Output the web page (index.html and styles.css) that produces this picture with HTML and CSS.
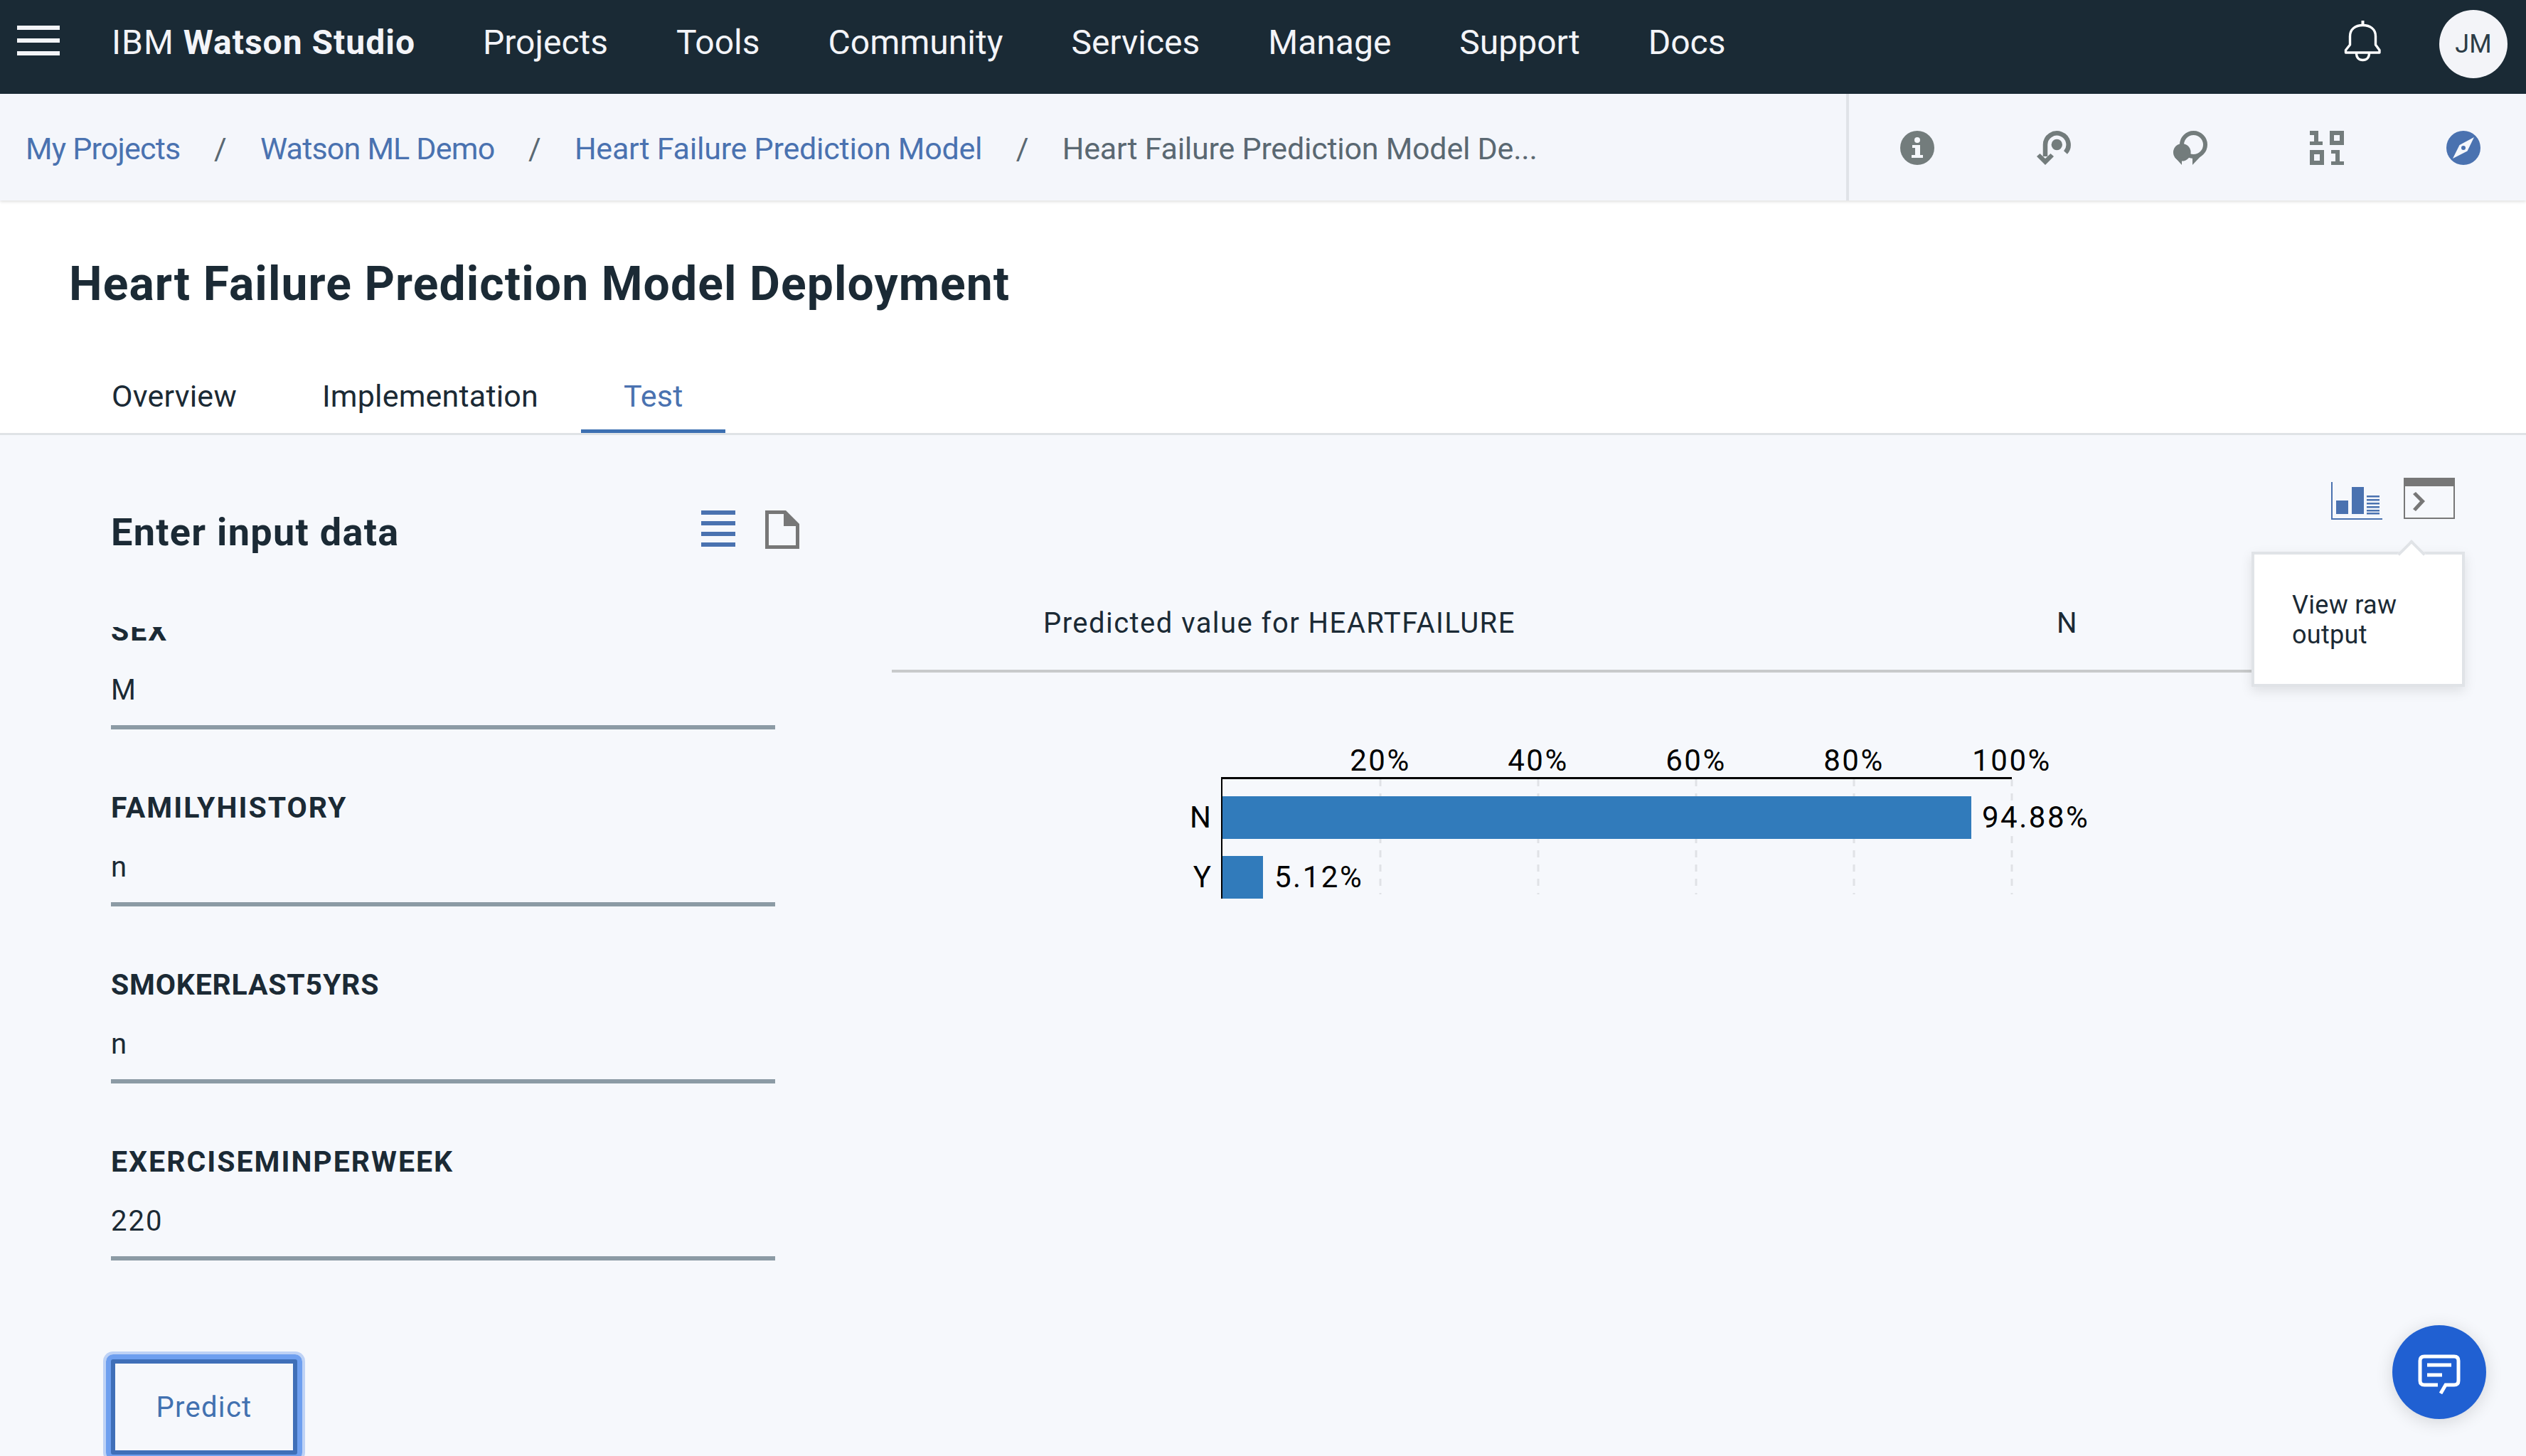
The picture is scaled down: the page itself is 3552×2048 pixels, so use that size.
FILE: index.html
```html
<!DOCTYPE html>
<html lang="en">
<head>
    <meta charset="UTF-8" />
    <title>Heart Failure Prediction Model Deployment</title>
    <link rel="stylesheet" href="styles.css">
</head>
<body>
    <header class="topbar">
        <div class="burger"><span></span><span></span><span></span></div>
        <div class="brand">IBM <b>Watson Studio</b></div>
        <nav class="mainnav">
            <a>Projects</a>
            <a>Tools</a>
            <a>Community</a>
            <a>Services</a>
            <a>Manage</a>
            <a>Support</a>
            <a>Docs</a>
        </nav>
        <svg class="bell" viewBox="0 0 52 58" fill="none" stroke="#fff" stroke-width="3.4">
            <path d="M26.5 0V6" stroke-width="4"/>
            <path d="M2.5 45V41.5L8.5 34V22C8.5 12 16 6.5 26.5 6.5S44.5 12 44.5 22V34L50 41.5V45Z" stroke-linejoin="round"/>
            <path d="M17.5 46C17.5 52 21 55.5 26.5 55.5S35.5 52 35.5 46"/>
        </svg>
        <div class="avatar">JM</div>
    </header>

    <div class="crumbbar">
        <div class="crumbs">
            <a class="short">My Projects</a><span class="sep">/</span>
            <a class="short">Watson ML Demo</a><span class="sep">/</span>
            <a>Heart Failure Prediction Model</a><span class="sep">/</span>
            <span class="current">Heart Failure Prediction Model De...</span>
        </div>
        <div class="tools">
            <svg viewBox="0 0 48 48">
                <circle cx="24" cy="24" r="24" fill="#737c7c"/>
                <circle cx="24" cy="13" r="4" fill="#f5f7fb"/>
                <path d="M17 20H28V34H32V38H16V34H21V24H17Z" fill="#f5f7fb"/>
            </svg>
            <svg viewBox="0 0 48 48" fill="#737c7c">
                <circle cx="28.3" cy="19.5" r="7.7"/>
                <path d="M12 36V19.5A16.3 16.3 0 1 1 40.5 30.5" fill="none" stroke="#737c7c" stroke-width="6.5"/>
                <path d="M0 36L4.5 32L12 39L19.5 32L24 36L12 48Z"/>
            </svg>
            <svg viewBox="0 0 48 48" fill="#737c7c">
                <circle cx="28.5" cy="19.5" r="16.5" fill="none" stroke="#737c7c" stroke-width="6"/>
                <circle cx="12.3" cy="30.3" r="12.3"/>
                <path d="M2 37L12 48V41L20 38Z"/>
                <path d="M27 48V37L38 34L46 28Z"/>
            </svg>
            <svg viewBox="0 0 48 48" fill="#737c7c">
                <path d="M0 0H12V15H18V20H0V15H6V6H0Z"/>
                <path fill-rule="evenodd" d="M28 0H48V20H28ZM34 6V14H42V6Z"/>
                <path fill-rule="evenodd" d="M0 27H20V48H0ZM6 33V42H14V33Z"/>
                <path d="M30 27H42V43H48V48H30V43H36V32H30Z"/>
            </svg>
            <svg viewBox="0 0 48 48">
                <circle cx="24" cy="24" r="24" fill="#4a72b0"/>
                <path d="M39 9L29.5 28.5L9 39L18.5 20Z" fill="#f5f7fb"/>
                <circle cx="24" cy="24" r="3" fill="#4a72b0"/>
            </svg>
        </div>
    </div>

    <div class="pagehead">
        <h1>Heart Failure Prediction Model Deployment</h1>
        <div class="tabs">
            <a>Overview</a>
            <a>Implementation</a>
            <a class="active">Test</a>
        </div>
    </div>

    <main class="content">
        <section class="inputpane">
            <div class="panehead">
                <h2>Enter input data</h2>
                <svg class="listicon" viewBox="0 0 48 51" fill="#4a72b0">
                    <rect y="0" width="48" height="6"/>
                    <rect y="15" width="48" height="6"/>
                    <rect y="30" width="48" height="6"/>
                    <rect y="45" width="48" height="6"/>
                </svg>
                <svg class="docicon" viewBox="0 0 48 54" fill="#777">
                    <path fill-rule="evenodd" d="M0 0H29L48 19V54H0ZM5 5V49H43V22H26V5Z"/>
                </svg>
            </div>
            <div class="fields">
                <div class="field">
                    <label>SEX</label>
                    <div class="value">M</div>
                </div>
                <div class="field">
                    <label>FAMILYHISTORY</label>
                    <div class="value">n</div>
                </div>
                <div class="field">
                    <label>SMOKERLAST5YRS</label>
                    <div class="value">n</div>
                </div>
                <div class="field">
                    <label>EXERCISEMINPERWEEK</label>
                    <div class="value">220</div>
                </div>
            </div>
            <button class="predict">Predict</button>
        </section>

        <section class="resultpane">
            <div class="viewicons">
                <svg class="charticon" viewBox="0 0 72 53" fill="#4a72b0">
                    <path d="M0 0H2V51H72V53H0Z"/>
                    <rect x="7" y="26" width="17" height="19"/>
                    <rect x="29" y="7" width="17" height="38"/>
                    <rect x="50" y="19" width="18" height="2.5"/>
                    <rect x="50" y="24" width="18" height="2.5"/>
                    <rect x="50" y="29" width="18" height="2.5"/>
                    <rect x="50" y="34" width="18" height="2.5"/>
                    <rect x="50" y="39" width="18" height="2.5"/>
                    <rect x="50" y="43" width="18" height="2.5"/>
                </svg>
                <svg class="termicon" viewBox="0 0 72 58" fill="#777">
                    <path fill-rule="evenodd" d="M0 0H72V58H0ZM2 12V56H70V12Z"/>
                    <path d="M13 23L17 20L30 33L17 47L13 44L23 33Z"/>
                </svg>
            </div>
            <div class="resultrow">
                <span class="resultname">Predicted value for HEARTFAILURE</span>
                <span>N</span>
            </div>
            <svg class="chart" viewBox="1660 1040 1300 240">
                <g class="grid">
                    <line x1="1941" y1="1096" x2="1941" y2="1258"/>
                    <line x1="2163" y1="1096" x2="2163" y2="1258"/>
                    <line x1="2385" y1="1096" x2="2385" y2="1258"/>
                    <line x1="2607" y1="1096" x2="2607" y2="1258"/>
                    <line x1="2829" y1="1096" x2="2829" y2="1258"/>
                </g>
                <rect class="bar" x="1718" y="1120" width="1054" height="60"/>
                <rect class="bar" x="1718" y="1204" width="58" height="60"/>
                <rect x="1719" y="1093" width="1110" height="3" fill="#000"/>
                <rect x="1717" y="1093" width="2" height="171" fill="#000"/>
                <g class="ticks">
                    <text x="1941" y="1084">20%</text>
                    <text x="2163" y="1084">40%</text>
                    <text x="2385" y="1084">60%</text>
                    <text x="2607" y="1084">80%</text>
                    <text x="2829" y="1084">100%</text>
                </g>
                <text class="cat" x="1703" y="1164">N</text>
                <text class="cat" x="1703" y="1248">Y</text>
                <text class="pct" x="2787" y="1164">94.88%</text>
                <text class="pct" x="1792" y="1248">5.12%</text>
            </svg>
            <div class="tooltip">View raw output</div>
        </section>
    </main>

    <div class="chatbtn">
        <svg viewBox="0 0 60 56" fill="none" stroke="#fff" stroke-width="5">
            <path d="M28 43H9Q3 43 3 37V9Q3 3 9 3H51Q57 3 57 9V37Q57 43 51 43H39L32 55"/>
            <path d="M13 15H47M13 29H34"/>
        </svg>
    </div>
</body>
</html>
```

FILE: styles.css
```css
html, body {
    margin: 0;
    padding: 0;
    height: 2048px;
    overflow: hidden;
}
body {
    font-family: Roboto, "Noto Sans", sans-serif;
    background-color: #f6f8fc;
    color: #1b2a35;
    position: relative;
}
a {
    color: inherit;
    text-decoration: none;
}

/* top bar */
.topbar {
    height: 132px;
    background-color: #1a2a35;
    color: #f3f4f8;
    display: flex;
    align-items: center;
    font-size: 48px;
}
.burger {
    width: 60px;
    height: 42px;
    margin: -18px 0 0 24px;
    display: flex;
    flex-direction: column;
    justify-content: space-between;
}
.burger span {
    display: block;
    height: 6px;
    background-color: #f3f4f8;
}
.brand {
    margin: -13px 0 0 73px;
    width: 522px;
    flex: none;
    letter-spacing: 1px;
}
.brand b {
    font-weight: 700;
}
.mainnav {
    display: flex;
    gap: 96px;
    margin-top: -13px;
    flex: 1;
}
.bell {
    width: 52px;
    height: 58px;
    margin: -16px 82px 0 0;
}
.avatar {
    width: 96px;
    height: 96px;
    border-radius: 50%;
    background-color: #f3f4f8;
    color: #2c3c46;
    font-size: 36px;
    display: flex;
    align-items: center;
    justify-content: center;
    margin: -8px 26px 0 0;
}

/* breadcrumb row */
.crumbbar {
    height: 150px;
    display: flex;
    background-color: #f4f6fb;
    box-shadow: 0 2px 4px rgba(0, 0, 0, 0.12);
    position: relative;
    font-size: 43px;
    letter-spacing: -0.23px;
}
.crumbs {
    width: 2596px;
    padding: 4px 0 0 36px;
    box-sizing: border-box;
    display: flex;
    align-items: center;
    color: #4a72b0;
}
.crumbs .short {
    letter-spacing: -0.8px;
}
.sep {
    color: #5a6872;
    margin: 0 47.5px;
}
.current {
    color: #5a6872;
}
.tools {
    flex: 1;
    border-left: 4px solid #e0e3e8;
    display: flex;
    align-items: center;
    padding: 2px 0 0 72px;
    gap: 144px;
}
.tools svg {
    width: 48px;
    height: 48px;
}

/* title and tabs */
.pagehead {
    background-color: #fff;
    height: 327px;
    border-bottom: 3px solid #dfe3e6;
    display: flex;
    flex-direction: column;
}
h1 {
    font-size: 66px;
    font-weight: 700;
    letter-spacing: 1.1px;
    margin: 0;
    padding: 76px 0 0 97px;
    line-height: 84px;
    height: 160px;
}
.tabs {
    display: flex;
    font-size: 43px;
    letter-spacing: 0.2px;
    padding-left: 97px;
    margin-top: 1px;
}
.tabs a {
    padding: 0 60px;
    height: 90px;
    line-height: 76px;
    box-sizing: border-box;
}
.tabs a.active {
    color: #4a72b0;
    border-bottom: 5px solid #3d70b2;
}

/* main area */
.content {
    display: flex;
    height: 1436px;
}
.inputpane {
    width: 1254px;
    flex: none;
    box-sizing: border-box;
    padding-left: 156px;
}
.panehead {
    width: 968px;
    height: 120px;
    margin-top: 78px;
    display: flex;
    align-items: center;
}
h2 {
    font-size: 54px;
    font-weight: 700;
    letter-spacing: 1.3px;
    margin: -4px 0 0;
    flex: 1;
}
.listicon {
    width: 48px;
    height: 51px;
    margin-right: 42px;
    margin-top: -14px;
}
.docicon {
    width: 48px;
    height: 54px;
    margin-top: -10px;
}
.fields {
    width: 934px;
    height: 960px;
    margin-top: 72px;
    overflow: hidden;
}
.field {
    height: 249px;
    box-sizing: border-box;
    padding-top: 85px;
    border-bottom: 6px solid #8c9ba5;
}
.field:first-child {
    margin-top: -105px;
}
.field label {
    display: block;
    font-size: 41px;
    font-weight: 700;
    letter-spacing: 2px;
    line-height: 50px;
}
.field:nth-child(3) label {
    letter-spacing: 0.8px;
}
.value {
    font-size: 40px;
    letter-spacing: 2px;
    line-height: 86px;
    margin-top: 16px;
}
.predict {
    display: block;
    position: relative;
    width: 262px;
    height: 134px;
    margin-top: 70px;
    background: transparent;
    border: 6px solid #3f6fb8;
    color: #4271b0;
    font-family: inherit;
    font-size: 40px;
    letter-spacing: 1.3px;
    padding: 0;
}
.predict::before {
    content: "";
    position: absolute;
    inset: -13px;
    border: 7px solid #6e9fef;
    border-radius: 10px;
    box-shadow: 0 0 0 4px #bed2f5;
}
.resultpane {
    flex: none;
    width: 2212px;
    position: relative;
}
.viewicons {
    height: 58px;
    margin-top: 60px;
    padding-right: 14px;
    display: flex;
    justify-content: flex-end;
    align-items: flex-end;
    gap: 30px;
}
.charticon {
    width: 72px;
    height: 53px;
    margin-bottom: -1px;
}
.termicon {
    width: 72px;
    height: 58px;
}
.resultrow {
    height: 130px;
    margin-top: 86px;
    box-sizing: border-box;
    border-bottom: 4px solid #c8cacb;
    padding: 0 0 6px 213px;
    display: flex;
    align-items: center;
    font-size: 40px;
    letter-spacing: 1.45px;
}
.resultname {
    width: 1425px;
}
.chart {
    display: block;
    width: 1300px;
    height: 240px;
    margin: 94px 0 0 406px;
    font-size: 42px;
}
.chart text {
    fill: #000;
}
.grid line {
    stroke: #e0e2e6;
    stroke-width: 3;
    stroke-dasharray: 10 10;
}
.bar {
    fill: #317bbb;
}
.ticks text {
    text-anchor: middle;
    letter-spacing: 2.5px;
}
.pct {
    letter-spacing: 2.5px;
}
.cat {
    text-anchor: end;
}

/* tooltip over the result table */
.tooltip {
    position: absolute;
    left: 1912px;
    top: 164px;
    width: 300px;
    height: 190px;
    box-sizing: border-box;
    background-color: #fff;
    border: 4px solid #e0e3e7;
    box-shadow: 0 6px 16px rgba(0, 0, 0, 0.1);
    padding: 50px 60px 0 53px;
    font-size: 36px;
    line-height: 42px;
    letter-spacing: 0.3px;
}
.tooltip::before {
    content: "";
    position: absolute;
    left: 207px;
    top: -15px;
    width: 24px;
    height: 24px;
    background-color: #fff;
    border-top: 4px solid #e0e3e7;
    border-left: 4px solid #e0e3e7;
    transform: rotate(45deg);
}

/* floating chat button */
.chatbtn {
    position: absolute;
    left: 3364px;
    top: 1864px;
    width: 132px;
    height: 132px;
    border-radius: 50%;
    background-color: #2060d2;
    box-shadow: 0 4px 24px rgba(0, 0, 0, 0.14);
    display: flex;
    align-items: center;
    justify-content: center;
}
.chatbtn svg {
    width: 60px;
    height: 56px;
    margin-top: 5px;
}
```
